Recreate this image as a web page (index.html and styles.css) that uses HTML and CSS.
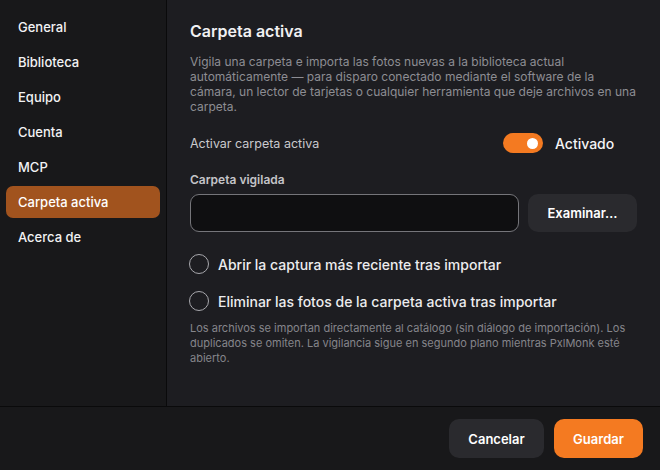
FILE: index.html
```html
<!DOCTYPE html>
<html lang="es">
<head>
<meta charset="utf-8">
<link rel="stylesheet" href="styles.css">
</head>
<body>
<div class="app">
  <div class="body">
    <nav class="sidebar">
      <div class="nav-item">General</div>
      <div class="nav-item">Biblioteca</div>
      <div class="nav-item">Equipo</div>
      <div class="nav-item">Cuenta</div>
      <div class="nav-item">MCP</div>
      <div class="nav-item active">Carpeta activa</div>
      <div class="nav-item">Acerca de</div>
    </nav>
    <main class="main">
      <h1 class="title">Carpeta activa</h1>
      <p class="desc">Vigila una carpeta e importa las fotos nuevas a la biblioteca actual automáticamente — para disparo conectado mediante el software de la cámara, un lector de tarjetas o cualquier herramienta que deje archivos en una carpeta.</p>
      <div class="toggle-row">
        <span class="toggle-label">Activar carpeta activa</span>
        <div class="toggle-wrap">
          <span class="switch"><span class="knob"></span></span>
          <span class="toggle-state">Activado</span>
        </div>
      </div>
      <div class="field-label">Carpeta vigilada</div>
      <div class="field-row">
        <div class="input"></div>
        <button class="btn btn-secondary browse">Examinar…</button>
      </div>
      <div class="check-row first">
        <span class="radio"></span>
        <span class="check-text">Abrir la captura más reciente tras importar</span>
      </div>
      <div class="check-row">
        <span class="radio"></span>
        <span class="check-text">Eliminar las fotos de la carpeta activa tras importar</span>
      </div>
      <p class="note">Los archivos se importan directamente al catálogo (sin diálogo de importación). Los duplicados se omiten. La vigilancia sigue en segundo plano mientras PxlMonk esté abierto.</p>
    </main>
  </div>
  <footer class="footer">
    <button class="btn btn-secondary">Cancelar</button>
    <button class="btn btn-primary">Guardar</button>
  </footer>
</div>
</body>
</html>
```

FILE: styles.css
```css
* { box-sizing: border-box; }
html, body {
  margin: 0;
  padding: 0;
  width: 660px;
  height: 470px;
  overflow: hidden;
  background: #18181a;
  font-family: Inter, "Noto Sans", sans-serif;
  color: #ececee;
}
.app {
  display: flex;
  flex-direction: column;
  height: 470px;
}
.body {
  display: flex;
  height: 406px;
}
.sidebar {
  width: 167px;
  flex: none;
  background: #18181a;
  border-right: 1px solid #0a0a0b;
  padding: 11px 6px;
  display: flex;
  flex-direction: column;
  gap: 3px;
}
.nav-item {
  height: 32px;
  line-height: 33px;
  padding-left: 12px;
  font-size: 13px;
  font-weight: 500;
  color: #f2f2f4;
  border-radius: 7px;
}
.nav-item.active {
  background: #a1531e;
  color: #fff;
}
.main {
  flex: 1;
  background: #1d1d21;
  padding: 21px 23px 0 23px;
}
.title {
  margin: 0;
  font-size: 16px;
  line-height: 20px;
  font-weight: 600;
  color: #f0f0f2;
}
.desc {
  margin: 13px 0 0 0;
  font-size: 12px;
  line-height: 15px;
  color: #8d8d93;
}
.toggle-row {
  margin-top: 19px;
  height: 20px;
  display: flex;
  align-items: center;
  justify-content: space-between;
}
.toggle-label {
  font-size: 12.5px;
  color: #c9c9cd;
}
.toggle-wrap {
  display: flex;
  align-items: center;
  gap: 12px;
  width: 134px;
}
.switch {
  width: 40px;
  height: 20px;
  border-radius: 10px;
  background: #f47a21;
  position: relative;
  flex: none;
}
.knob {
  position: absolute;
  right: 5px;
  top: 4.5px;
  width: 11px;
  height: 11px;
  border-radius: 50%;
  background: #fff;
}
.toggle-state {
  font-size: 14px;
  font-weight: 500;
  color: #f4f4f6;
}
.field-label {
  margin-top: 19px;
  font-size: 12px;
  line-height: 15px;
  font-weight: 600;
  color: #c4c4c8;
}
.field-row {
  margin-top: 7px;
  display: flex;
  gap: 9px;
  height: 38px;
}
.input {
  flex: 1;
  background: #0f0f11;
  border: 1px solid #75757a;
  border-radius: 9px;
}
.btn {
  border: none;
  font-family: inherit;
  font-weight: 600;
  font-size: 13px;
  color: #fff;
  border-radius: 10px;
  padding: 0 16px;
  cursor: pointer;
}
.btn-secondary { background: #2a2a2e; }
.btn-primary { background: #f47a21; }
.browse {
  width: 109px;
  height: 38px;
}
.check-row {
  margin-top: 17px;
  height: 20px;
  display: flex;
  align-items: center;
  gap: 9px;
}
.check-row.first { margin-top: 22px; }
.radio {
  width: 20px;
  height: 20px;
  border-radius: 50%;
  border: 1.5px solid #a8a8ad;
  flex: none;
  margin-left: -1px;
}
.check-text {
  font-size: 14px;
  font-weight: 500;
  color: #ececee;
}
.note {
  margin: 10px 0 0 0;
  font-size: 11px;
  line-height: 15px;
  color: #85858b;
}
.footer {
  height: 64px;
  border-top: 1px solid #0a0a0b;
  background: #18181a;
  display: flex;
  justify-content: flex-end;
  align-items: flex-start;
  padding: 12px 17px 0 0;
  gap: 10px;
}
.footer .btn {
  height: 39px;
}
.footer .btn-secondary { width: 95px; }
.footer .btn-primary { width: 89px; }
```
